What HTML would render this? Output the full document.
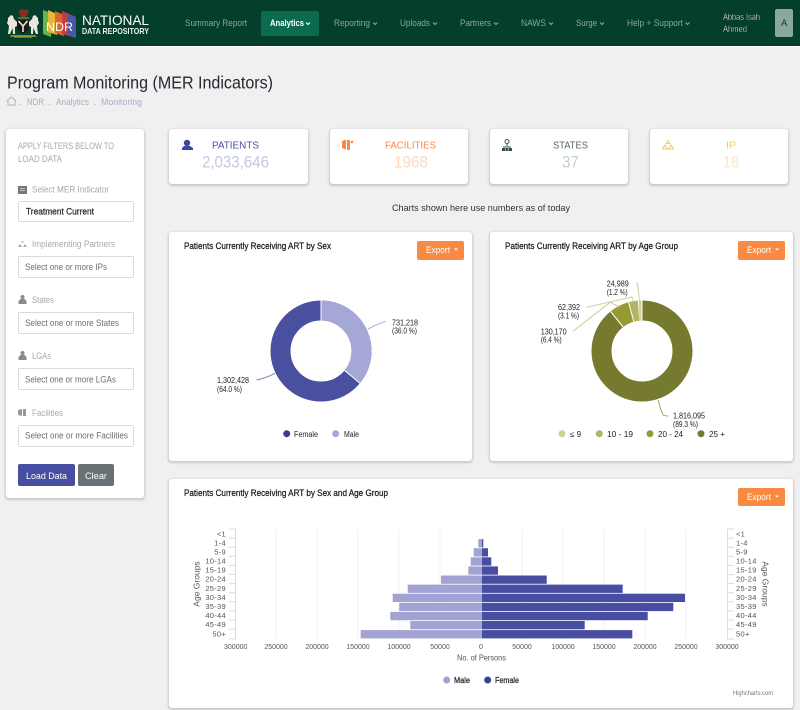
<!DOCTYPE html>
<html lang="en"><head><meta charset="utf-8"><title>Program Monitoring</title>
<style>
html,body{margin:0;padding:0;width:800px;height:710px;overflow:hidden;background:#f1efef}
.c{position:absolute;background:#fff;border-radius:3px;box-shadow:0 1px 2px 1px rgba(120,115,130,.32)}
.i{position:absolute;background:#fff;border:1px solid #d8dae2;border-radius:2px;box-sizing:border-box;left:18px;width:116px;height:22px}
svg{position:absolute;left:0;top:0;filter:blur(.3px)}
text{font-family:"Liberation Sans",sans-serif}
.m{stroke:currentColor;stroke-width:.2px}
</style></head><body>
<div style="position:absolute;left:0;top:0;width:800px;height:46px;background:#033f2a"></div>
<div style="position:absolute;left:0;top:46px;width:800px;height:1px;background:#fff"></div>
<div style="position:absolute;left:261px;top:11px;width:58px;height:25px;background:#0b6b4e;border-radius:2px"></div>
<div style="position:absolute;left:775px;top:9px;width:18px;height:28px;background:#8aa99c;border-radius:2px"></div>
<div class="c" style="left:6px;top:129px;width:138px;height:369px"></div>
<div class="c" style="left:169px;top:129px;width:139px;height:55px"></div>
<div class="c" style="left:330px;top:129px;width:138px;height:55px"></div>
<div class="c" style="left:490px;top:129px;width:138px;height:55px"></div>
<div class="c" style="left:650px;top:129px;width:138px;height:55px"></div>
<div class="c" style="left:169px;top:232px;width:303px;height:229px"></div>
<div class="c" style="left:490px;top:232px;width:303px;height:229px"></div>
<div class="c" style="left:169px;top:479px;width:624px;height:229px"></div>
<div class="i" style="top:201px;height:21px"></div>
<div class="i" style="top:256px"></div>
<div class="i" style="top:312px"></div>
<div class="i" style="top:368px"></div>
<div class="i" style="top:425px"></div>
<div style="position:absolute;left:18px;top:464px;width:57px;height:22px;background:#474da0;border-radius:2px"></div>
<div style="position:absolute;left:78px;top:464px;width:36px;height:22px;background:#687174;border-radius:2px"></div>
<div style="position:absolute;left:417px;top:241px;width:47px;height:19px;background:#f98a42;border-radius:2px"></div>
<div style="position:absolute;left:738px;top:241px;width:47px;height:19px;background:#f98a42;border-radius:2px"></div>
<div style="position:absolute;left:738px;top:488px;width:47px;height:18px;background:#f98a42;border-radius:2px"></div>

<svg width="800" height="710" viewBox="0 0 800 710" xmlns="http://www.w3.org/2000/svg">
<!-- coat of arms -->
<path d="M19 11l3-2 2 1 3-1 2 3-2 3-2 3h-3l-2-3z" fill="#8f2a25"/>
<rect x="18" y="17" width="11" height="2" fill="#3f7a3a"/>
<path d="M8 18l3-3 2 1 1 3 3 3v4l-2 1v7h-2l-.5-6-2.500 6h-2l1-8-2-3 1-3z" fill="#e8e8e0"/>
<path d="M38 18l-3-3-2 1-1 3-3 3v4l2 1v7h2l.5-6 2.500 6h2l-1-8 2-3-1-3z" fill="#e8e8e0"/>
<path d="M17 20h12v9l-6 5-6-5z" fill="#1b1b16"/>
<path d="M18.500 21l4.500 5 4.500-5M23 26v6" stroke="#e8e8e0" stroke-width="1.600" fill="none"/>
<path d="M11 35h24l2 2H10z" fill="#5f9a3a"/>
<path d="M14 37h18" stroke="#c9a23a" stroke-width="1"/>
<!-- NDR logo -->
<path d="M43 10l8 3v24l-8-3z" fill="#6cb24a"/>
<path d="M48 10l9 4v21l-9-3z" fill="#e3b93a"/>
<path d="M55 11l9 4v21l-9-3z" fill="#e0642e"/>
<path d="M62 11l5 2 9 4v21l-14-4z" fill="#c63f3f" opacity=".95"/>
<path d="M68 14l8 3v21l-8-3z" fill="#4a55a8"/>
<text x="46" y="31" font-size="12" fill="#fff" textLength="27" lengthAdjust="spacingAndGlyphs">NDR</text>
<text x="82" y="25" font-size="14" fill="#fff" textLength="67" lengthAdjust="spacingAndGlyphs">NATIONAL</text>
<text x="82" y="34" font-size="8.200" font-weight="bold" fill="#e8efe9" textLength="67" lengthAdjust="spacingAndGlyphs">DATA REPOSITORY</text>
<!-- nav -->
<g font-size="9.500" fill="#8aa99c">
<text x="185" y="26" textLength="62" lengthAdjust="spacingAndGlyphs">Summary Report</text>
<text x="270" y="26" fill="#fff" font-weight="bold" textLength="34" lengthAdjust="spacingAndGlyphs">Analytics</text>
<text x="334" y="26" textLength="36" lengthAdjust="spacingAndGlyphs">Reporting</text>
<text x="400" y="26" textLength="30" lengthAdjust="spacingAndGlyphs">Uploads</text>
<text x="460" y="26" textLength="31" lengthAdjust="spacingAndGlyphs">Partners</text>
<text x="521" y="26" textLength="25" lengthAdjust="spacingAndGlyphs">NAWS</text>
<text x="576" y="26" textLength="21" lengthAdjust="spacingAndGlyphs">Surge</text>
<text x="627" y="26" textLength="56" lengthAdjust="spacingAndGlyphs">Help + Support</text>
</g>
<g fill="none" stroke="#8aa99c" stroke-width="1.100">
<path d="M306 22.500l2 2 2-2" stroke="#fff"/>
<path d="M373 22.500l2 2 2-2M433 22.500l2 2 2-2M494 22.500l2 2 2-2M549 22.500l2 2 2-2M600 22.500l2 2 2-2M685.500 22.500l2 2 2-2"/>
</g>
<g font-size="9" fill="#f0f4f1">
<text x="723" y="20" textLength="37" lengthAdjust="spacingAndGlyphs" class="m">Abbas Isah</text>
<text x="723" y="32" textLength="24" lengthAdjust="spacingAndGlyphs" class="m">Ahmed</text>
</g>
<text x="781" y="26" font-size="9.500" fill="#033f2a">A</text>
<!-- heading -->
<text x="7" y="88.500" font-size="17.500" fill="#222a33" textLength="266" lengthAdjust="spacingAndGlyphs">Program Monitoring (MER Indicators)</text>
<path d="M7 101l4.500-4 4.500 4M8 100v5h7v-5" fill="none" stroke="#a9afc6" stroke-width=".9"/>
<g font-size="9.500" fill="#a9afc6">
<text x="19" y="105">.</text><text x="48" y="105">.</text><text x="94" y="105">.</text>
<text x="27" y="105" textLength="17" lengthAdjust="spacingAndGlyphs">NDR</text>
<text x="56" y="105" textLength="33" lengthAdjust="spacingAndGlyphs">Analytics</text>
<text x="101" y="105" textLength="41" lengthAdjust="spacingAndGlyphs">Monitoring</text>
</g>
<!-- sidebar -->
<g font-size="9" fill="#a8a8a8">
<text x="18" y="149" textLength="96" lengthAdjust="spacingAndGlyphs">APPLY FILTERS BELOW TO</text>
<text x="18" y="162" textLength="44" lengthAdjust="spacingAndGlyphs">LOAD DATA</text>
<text x="32" y="192.700" textLength="77" lengthAdjust="spacingAndGlyphs">Select MER Indicator</text>
<text x="32" y="247" textLength="83" lengthAdjust="spacingAndGlyphs">Implementing Partners</text>
<text x="32" y="303" textLength="22" lengthAdjust="spacingAndGlyphs">States</text>
<text x="32" y="359" textLength="19" lengthAdjust="spacingAndGlyphs">LGAs</text>
<text x="32" y="416" textLength="31" lengthAdjust="spacingAndGlyphs">Facilities</text>
</g>
<rect x="18" y="186" width="9" height="8" fill="#777"/><path d="M20 188.500h5M20 190.500h5" stroke="#ddd" stroke-width=".8"/>
<g fill="#a8a8a8">
<path d="M22.500 240.500l1.500 2h-3zM20 244l2 3h-4zM25 244l2 3h-4z"/>
<circle cx="22.500" cy="297" r="2" fill="#8a8a8a"/><path d="M18.500 304v-3l2-2h4l2 2v3z" fill="#8a8a8a"/>
<circle cx="22.500" cy="353" r="2" fill="#8a8a8a"/><path d="M18.500 360v-3l2-2h4l2 2v3z" fill="#8a8a8a"/>
<path d="M18 410l4-1v7l-4-1zM23 409h3v7h-3z" fill="#999"/>
</g>
<text x="26" y="214.500" font-size="9" fill="#333" textLength="68" lengthAdjust="spacingAndGlyphs" class="m">Treatment Current</text>
<g font-size="9" fill="#6e6e6e">
<text x="25" y="270" textLength="82" lengthAdjust="spacingAndGlyphs">Select one or more IPs</text>
<text x="25" y="326" textLength="94" lengthAdjust="spacingAndGlyphs">Select one or more States</text>
<text x="25" y="382.500" textLength="91" lengthAdjust="spacingAndGlyphs">Select one or more LGAs</text>
<text x="25" y="438.500" textLength="103" lengthAdjust="spacingAndGlyphs">Select one or more Facilities</text>
</g>
<text x="26" y="479" font-size="9.500" fill="#fff" textLength="41" lengthAdjust="spacingAndGlyphs">Load Data</text>
<text x="85" y="479" font-size="9.500" fill="#fff" textLength="22" lengthAdjust="spacingAndGlyphs">Clear</text>
<!-- stat cards -->
<text x="212" y="148.300" font-size="10.500" fill="#4a50a0" textLength="47" lengthAdjust="spacingAndGlyphs">PATIENTS</text>
<text x="202" y="167.700" font-size="16.500" fill="#c5c7e2" textLength="67" lengthAdjust="spacingAndGlyphs">2,033,646</text>
<text x="385" y="148.300" font-size="10.500" fill="#f98a42" textLength="51" lengthAdjust="spacingAndGlyphs">FACILITIES</text>
<text x="394" y="167.700" font-size="16.500" fill="#fcd8c0" textLength="34" lengthAdjust="spacingAndGlyphs">1968</text>
<text x="553" y="148.300" font-size="10.500" fill="#55695c" textLength="35" lengthAdjust="spacingAndGlyphs">STATES</text>
<text x="562" y="167.700" font-size="16.500" fill="#c7d1c5" textLength="17" lengthAdjust="spacingAndGlyphs">37</text>
<text x="726" y="148.300" font-size="10.500" fill="#f4ca6a" textLength="10" lengthAdjust="spacingAndGlyphs">IP</text>
<text x="723" y="167.700" font-size="16.500" fill="#fbe9c4" textLength="16" lengthAdjust="spacingAndGlyphs">18</text>
<circle cx="187" cy="143" r="3.200" fill="#3f45a0"/><path d="M182 150v-2l2-2h6l3 2v2z" fill="#3f45a0"/>
<path d="M342 141l4-1.500v10l-4-1.500zM347 140h3v10h-3z" fill="#f98a42"/><circle cx="352" cy="142" r="1.300" fill="#f98a42"/>
<circle cx="507" cy="141.500" r="2" fill="none" stroke="#33513f" stroke-width="1"/><path d="M507 144v2M503 147h8" stroke="#33513f"/><path d="M502 148h3v3h-3zM505.500 148h3v3h-3zM509 148h3v3h-3z" fill="#33513f"/>
<path d="M668 140.500l1.800 3h-3.600zM665 145l2.600 4h-5zM671 145l2.600 4h-5z" fill="none" stroke="#f4ca6a" stroke-width="1"/>
<text x="392" y="211" font-size="9.500" fill="#333" textLength="178" lengthAdjust="spacingAndGlyphs">Charts shown here use numbers as of today</text>
<!-- card titles -->
<g font-size="9" fill="#222" class="m">
<text x="184" y="249" textLength="147" lengthAdjust="spacingAndGlyphs">Patients Currently Receiving ART by Sex</text>
<text x="505" y="249" textLength="173" lengthAdjust="spacingAndGlyphs">Patients Currently Receiving ART by Age Group</text>
<text x="184" y="496" textLength="204" lengthAdjust="spacingAndGlyphs">Patients Currently Receiving ART by Sex and Age Group</text>
</g>
<g font-size="9" fill="#fff">
<text x="426" y="253" textLength="24" lengthAdjust="spacingAndGlyphs">Export</text>
<text x="747" y="253" textLength="24" lengthAdjust="spacingAndGlyphs">Export</text>
<text x="747" y="500" textLength="24" lengthAdjust="spacingAndGlyphs">Export</text>
</g>
<path d="M454 248.500h4l-2 2zM775 248.500h4l-2 2zM775 495.500h4l-2 2z" fill="#fff"/>
<!-- donut 1 -->
<circle cx="321" cy="351" r="40.500" fill="none" stroke="#4a50a0" stroke-width="20"/>
<circle cx="321" cy="351" r="40.500" fill="none" stroke="#a5a8d6" stroke-width="20" stroke-dasharray="91.600 300" transform="rotate(-90 321 351)"/>
<path d="M321 300.500v20M344.500 370.400l15.900 13.200" stroke="#fff" stroke-width="1"/>
<path d="M367.700 329.300Q375 325 385.700 321.300" fill="none" stroke="#a5a8d6" stroke-width="1"/>
<path d="M275 373.300Q266 378 256.700 380" fill="none" stroke="#4a50a0" stroke-width="1" opacity=".7"/>
<g font-size="8" fill="#222">
<text x="392" y="325.700" textLength="26" lengthAdjust="spacingAndGlyphs">731,218</text>
<text x="392" y="333.500" textLength="25" lengthAdjust="spacingAndGlyphs">(36.0 %)</text>
<text x="217" y="383" textLength="32" lengthAdjust="spacingAndGlyphs">1,302,428</text>
<text x="217" y="392" textLength="25" lengthAdjust="spacingAndGlyphs">(64.0 %)</text>
<text x="294" y="437" textLength="24" lengthAdjust="spacingAndGlyphs">Female</text>
<text x="344" y="437" textLength="15" lengthAdjust="spacingAndGlyphs">Male</text>
</g>
<circle cx="286.700" cy="433.700" r="3.500" fill="#3a3f96"/><circle cx="335.700" cy="433.700" r="3.500" fill="#a5a8d6"/>
<!-- donut 2 -->
<circle cx="642" cy="351" r="40.500" fill="none" stroke="#757a2e" stroke-width="20"/>
<circle cx="642" cy="351" r="40.500" fill="none" stroke="#959a35" stroke-width="20" stroke-dasharray="16.300 300" transform="rotate(231.500 642 351)"/>
<circle cx="642" cy="351" r="40.500" fill="none" stroke="#b2b565" stroke-width="20" stroke-dasharray="7.900 300" transform="rotate(254.500 642 351)"/>
<circle cx="642" cy="351" r="40.500" fill="none" stroke="#cfd09c" stroke-width="20" stroke-dasharray="3.100 300" transform="rotate(265.700 642 351)"/>
<path d="M642 300.500v20M638.300 300.600l1.600 20.100M628.500 302.300l5.300 19.300M610.600 311.500l12.500 15.500" stroke="#fff" stroke-width="1"/>
<path d="M639.700 320Q640 300 638 288Q637.500 284 636.300 282.300M633.300 301.700L632 297L586.700 307.300" fill="none" stroke="#cfd09c" stroke-width="1"/>
<path d="M573.300 331L610 302.300L619.300 306.700" fill="none" stroke="#c9cb8e" stroke-width="1"/>
<path d="M658.300 400Q661 412 663.300 415Q665 416 668.300 416" fill="none" stroke="#a5a850" stroke-width="1"/>
<g font-size="8" fill="#222">
<text x="606.700" y="286.700" textLength="22" lengthAdjust="spacingAndGlyphs">24,989</text>
<text x="606.700" y="295" textLength="21" lengthAdjust="spacingAndGlyphs">(1.2 %)</text>
<text x="558" y="310" textLength="22" lengthAdjust="spacingAndGlyphs">62,392</text>
<text x="558" y="318.300" textLength="21" lengthAdjust="spacingAndGlyphs">(3.1 %)</text>
<text x="540.700" y="334.700" textLength="26" lengthAdjust="spacingAndGlyphs">130,170</text>
<text x="540.700" y="342.300" textLength="21" lengthAdjust="spacingAndGlyphs">(6.4 %)</text>
<text x="673" y="418.700" textLength="32" lengthAdjust="spacingAndGlyphs">1,816,095</text>
<text x="673" y="427" textLength="25" lengthAdjust="spacingAndGlyphs">(89.3 %)</text>
<text x="570" y="437" textLength="11" lengthAdjust="spacingAndGlyphs">≤ 9</text>
<text x="607" y="437" textLength="26" lengthAdjust="spacingAndGlyphs">10 - 19</text>
<text x="658" y="437" textLength="25" lengthAdjust="spacingAndGlyphs">20 - 24</text>
<text x="709" y="437" textLength="16" lengthAdjust="spacingAndGlyphs">25 +</text>
</g>
<circle cx="562" cy="433.700" r="3.500" fill="#cfd09c"/><circle cx="599.300" cy="433.700" r="3.500" fill="#b2b565"/><circle cx="650" cy="433.700" r="3.500" fill="#959a35"/><circle cx="701" cy="433.700" r="3.500" fill="#757a2e"/>
<!-- pyramid grid -->
<path d="M276 529v110M317 529v110M358 529v110M399 529v110M440 529v110M522 529v110M563 529v110M604 529v110M645 529v110M686 529v110" stroke="#f0f0f4" stroke-width="1"/>
<path d="M235.500 529v110.500M229 529h6.500M229 538.100h6.500M229 547.200h6.500M229 556.300h6.500M229 565.400h6.500M229 574.500h6.500M229 583.600h6.500M229 592.700h6.500M229 601.800h6.500M229 610.900h6.500M229 620h6.500M229 629.100h6.500M229 639h6.500M727.500 529v110.500M727.500 529h6.500M727.500 538.100h6.500M727.500 547.200h6.500M727.500 556.300h6.500M727.500 565.400h6.500M727.500 574.500h6.500M727.500 583.600h6.500M727.500 592.700h6.500M727.500 601.800h6.500M727.500 610.900h6.500M727.500 620h6.500M727.500 629.100h6.500M727.500 639h6.500" stroke="#d5dcee" stroke-width="1" fill="none"/>
<!-- pyramid bars: male -->
<g fill="#a1a3d3">
<rect x="478.300" y="539.100" width="2.700" height="8.300"/>
<rect x="473.700" y="548.200" width="7.300" height="8.300"/>
<rect x="470.700" y="557.300" width="10.300" height="8.300"/>
<rect x="468.300" y="566.400" width="12.700" height="8.300"/>
<rect x="441" y="575.500" width="40" height="8.300"/>
<rect x="407.700" y="584.600" width="73.300" height="8.300"/>
<rect x="392.700" y="593.700" width="88.300" height="8.300"/>
<rect x="399.300" y="602.800" width="81.700" height="8.300"/>
<rect x="390.300" y="611.900" width="90.700" height="8.300"/>
<rect x="410.300" y="621" width="70.700" height="8.300"/>
<rect x="360.700" y="630.100" width="120.300" height="8.300"/>
</g>
<g fill="#474da0">
<rect x="481.500" y="539.100" width="1.800" height="8.300"/>
<rect x="481.500" y="548.200" width="6.500" height="8.300"/>
<rect x="481.500" y="557.300" width="9.800" height="8.300"/>
<rect x="481.500" y="566.400" width="16.500" height="8.300"/>
<rect x="481.500" y="575.500" width="65.200" height="8.300"/>
<rect x="481.500" y="584.600" width="141.200" height="8.300"/>
<rect x="481.500" y="593.700" width="203.500" height="8.300"/>
<rect x="481.500" y="602.800" width="191.800" height="8.300"/>
<rect x="481.500" y="611.900" width="166.200" height="8.300"/>
<rect x="481.500" y="621" width="103.200" height="8.300"/>
<rect x="481.500" y="630.100" width="150.800" height="8.300"/>
</g>
<!-- pyramid labels -->
<g font-size="7.500" fill="#555" text-anchor="end" letter-spacing=".3">
<text x="226" y="536.700">&lt;1</text><text x="226" y="545.300">1-4</text><text x="226" y="554.400">5-9</text><text x="226" y="563.500">10-14</text><text x="226" y="572.600">15-19</text><text x="226" y="581.700">20-24</text><text x="226" y="590.800">25-29</text><text x="226" y="599.900">30-34</text><text x="226" y="609">35-39</text><text x="226" y="618.100">40-44</text><text x="226" y="627.200">45-49</text><text x="226" y="636.300">50+</text>
</g>
<g font-size="7.500" fill="#555" letter-spacing=".3">
<text x="736" y="536.700">&lt;1</text><text x="736" y="545.300">1-4</text><text x="736" y="554.400">5-9</text><text x="736" y="563.500">10-14</text><text x="736" y="572.600">15-19</text><text x="736" y="581.700">20-24</text><text x="736" y="590.800">25-29</text><text x="736" y="599.900">30-34</text><text x="736" y="609">35-39</text><text x="736" y="618.100">40-44</text><text x="736" y="627.200">45-49</text><text x="736" y="636.300">50+</text>
</g>
<text transform="translate(199.500 584) rotate(-90)" text-anchor="middle" font-size="8.500" fill="#555">Age Groups</text>
<text transform="translate(762.500 584) rotate(90)" text-anchor="middle" font-size="8.500" fill="#555">Age Groups</text>
<g font-size="7" fill="#555" text-anchor="middle">
<text x="235.700" y="649">300000</text><text x="276" y="649">250000</text><text x="317" y="649">200000</text><text x="358" y="649">150000</text><text x="399" y="649">100000</text><text x="440" y="649">50000</text><text x="481" y="649">0</text><text x="522" y="649">50000</text><text x="563" y="649">100000</text><text x="604" y="649">150000</text><text x="645" y="649">200000</text><text x="686" y="649">250000</text><text x="727" y="649">300000</text>
</g>
<text x="457" y="660.700" font-size="8.500" fill="#555" textLength="49" lengthAdjust="spacingAndGlyphs">No. of Persons</text>
<circle cx="446.700" cy="680" r="3.500" fill="#a1a3d3"/><circle cx="487.700" cy="680" r="3.500" fill="#3a3f96"/>
<text x="454" y="683" font-size="8" fill="#333" class="m" textLength="16" lengthAdjust="spacingAndGlyphs">Male</text>
<text x="495" y="683" font-size="8" fill="#333" class="m" textLength="24" lengthAdjust="spacingAndGlyphs">Female</text>
<text x="733" y="695" font-size="6" fill="#777" textLength="40" lengthAdjust="spacingAndGlyphs">Highcharts.com</text>
</svg>
</body></html>
